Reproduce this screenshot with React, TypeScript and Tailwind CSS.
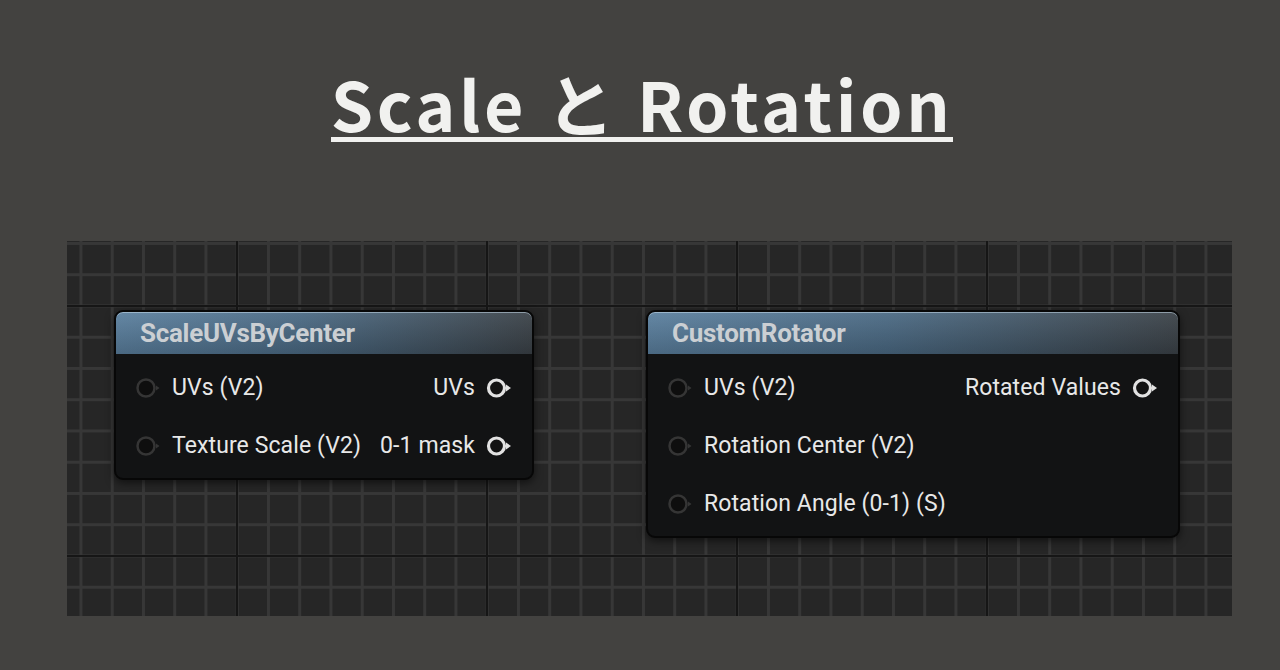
import React from "react";

type Row = { input?: string; output?: string };

function InputPin() {
  return (
    <svg width="26" height="22" viewBox="0 0 26 22" className="shrink-0">
      <circle cx="11" cy="11" r="8.5" fill="#0e0e0e" stroke="#353535" strokeWidth="2.5" />
      <path d="M21 8.5 L24.5 11 L21 13.5 Z" fill="#353535" />
    </svg>
  );
}

function OutputPin() {
  return (
    <svg width="26" height="22" viewBox="0 0 26 22" className="shrink-0">
      <circle cx="10.5" cy="11" r="8" fill="#131313" stroke="#e2e2e2" strokeWidth="3.2" />
      <path d="M20 7.5 L25 11 L20 14.5 Z" fill="#e2e2e2" />
    </svg>
  );
}

function GraphNode({
  title,
  rows,
  className,
}: {
  title: string;
  rows: Row[];
  className: string;
}) {
  return (
    <div
      className={`absolute flex flex-col rounded-[9px] border-2 border-[#070707] bg-[#121314] shadow-[0_3px_8px_rgba(0,0,0,0.55)] ${className}`}
    >
      {/* header bar */}
      <div className="flex h-[42px] items-center rounded-t-[7px] bg-[linear-gradient(to_bottom,rgba(255,255,255,0.06),rgba(0,0,0,0.18)),linear-gradient(to_right,#5b809f,#4b6a84_45%,#3b4248)] pl-[24px] shadow-[inset_0_1px_0_rgba(200,220,235,0.55)]">
        <span className="text-[26px] font-bold tracking-[-0.3px] text-[#cbcfd3]">{title}</span>
      </div>

      {/* pins */}
      <div className="flex flex-col pt-[5px] pb-[3px]">
        {rows.map((row, i) => (
          <div key={i} className="flex h-[58px] items-center justify-between pl-[19px] pr-[20px]">
            <div className="flex items-center gap-[11px]">
              {row.input && (
                <>
                  <InputPin />
                  <span className="text-[23px] tracking-[0.1px] text-[#e8e8e8]">{row.input}</span>
                </>
              )}
            </div>
            {row.output && (
              <div className="flex items-center gap-[11px]">
                <span className="text-[23px] tracking-[0.1px] text-[#e8e8e8]">{row.output}</span>
                <OutputPin />
              </div>
            )}
          </div>
        ))}
      </div>
    </div>
  );
}

export default function App() {
  return (
    <div className="h-[670px] w-[1280px] overflow-hidden bg-[#434240] font-['Roboto',sans-serif]">
      {/* Heading */}
      <div className="flex h-[241px] justify-center pt-[69px] pl-[4px]">
        <h1 className="inline-block h-[73px] border-b-[5px] border-[#f1f1ef] font-['Noto_Sans_CJK_JP','Noto_Sans',sans-serif] text-[68px] leading-none font-bold tracking-[3.6px] text-[#f1f1ef]">
          Scale と Rotation
        </h1>
      </div>

      {/* Material graph canvas */}
      <div className="relative ml-[67px] h-[375px] w-[1165px] bg-[#262626] bg-[image:linear-gradient(to_right,#161616_0_2px,transparent_2px),linear-gradient(to_bottom,#161616_0_2px,transparent_2px),linear-gradient(to_right,#373737_0_3px,transparent_3px),linear-gradient(to_bottom,#373737_0_3px,transparent_3px)] bg-size-[250px_100%,100%_250px,31.25px_100%,100%_31.25px] bg-position-[169px_0,0_64px,12.5px_0,0_1px]">
        <GraphNode
          title="ScaleUVsByCenter"
          className="left-[47px] top-[69px] w-[420px]"
          rows={[
            { input: "UVs (V2)", output: "UVs" },
            { input: "Texture Scale (V2)", output: "0-1 mask" },
          ]}
        />
        <GraphNode
          title="CustomRotator"
          className="left-[579px] top-[69px] w-[534px]"
          rows={[
            { input: "UVs (V2)", output: "Rotated Values" },
            { input: "Rotation Center (V2)" },
            { input: "Rotation Angle (0-1) (S)" },
          ]}
        />
      </div>
    </div>
  );
}
